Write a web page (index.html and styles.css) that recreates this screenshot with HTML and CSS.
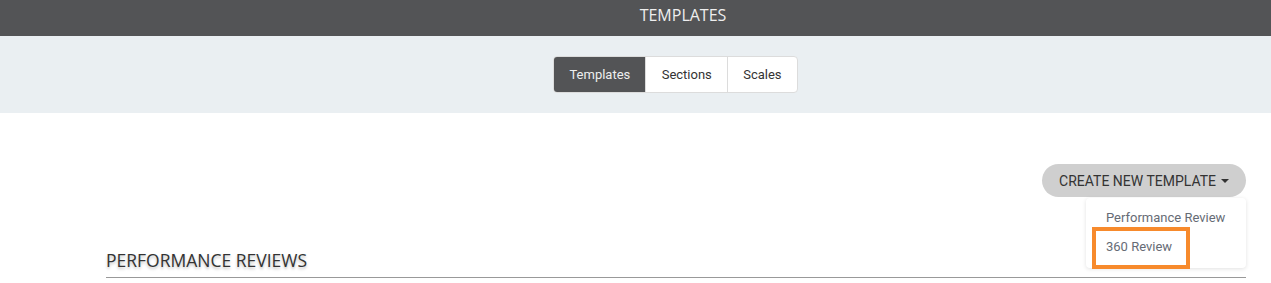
FILE: index.html
```html
<!DOCTYPE html>
<html lang="en">
<head>
<meta charset="utf-8">
<title>Templates</title>
<link rel="stylesheet" href="styles.css">
</head>
<body>
<div class="main">
  <header class="topbar">TEMPLATES</header>
  <nav class="subnav">
    <div class="tabs">
      <a class="tab active">Templates</a>
      <a class="tab">Sections</a>
      <a class="tab">Scales</a>
    </div>
  </nav>
  <section class="content">
    <div class="actions">
      <div class="dropdown">
        <button class="create-btn">CREATE NEW TEMPLATE<span class="caret"></span></button>
        <ul class="menu">
          <li class="menu-item">Performance Review</li>
          <li class="menu-item">360 Review</li>
          <li class="highlight"></li>
        </ul>
      </div>
    </div>
    <h2 class="section-title">PERFORMANCE REVIEWS</h2>
  </section>
</div>
</body>
</html>
```

FILE: styles.css
```css
* { box-sizing: border-box; }
html, body { margin: 0; padding: 0; background: #fff; }
body { font-family: Roboto, "Liberation Sans", sans-serif; overflow: hidden; }

.topbar {
  height: 36px;
  background: #535456;
  color: #eeeeee;
  font-family: "Open Sans", sans-serif;
  font-size: 16px;
  line-height: 22px;
  padding: 4px 0 0 95px;
  text-align: center;
}

.subnav {
  background: #eaeff2;
  height: 77px;
  padding: 20px 0 0 80px;
  display: flex;
  justify-content: center;
}
.tabs {
  display: flex;
  height: 37px;
  border: 1px solid #dcdcdc;
  border-radius: 4px;
  background: #fff;
  overflow: hidden;
}
.tab {
  font-size: 13px;
  color: #333;
  line-height: 35px;
  padding: 0 15.2px;
  border-left: 1px solid #dcdcdc;
}
.tab:first-child { border-left: 0; }
.tab.active { background: #535456; color: #eeeeee; }

.content { padding: 0 25px 0 106px; }
.actions { display: flex; justify-content: flex-end; margin-top: 51px; }
.dropdown { position: relative; }
.create-btn {
  height: 33px;
  border: 0;
  border-radius: 17px;
  background: #cfcfcf;
  color: #333;
  font-family: Roboto, sans-serif;
  font-size: 14px;
  padding: 0 17px;
  display: flex;
  align-items: center;
}
.caret {
  display: inline-block;
  margin-left: 5px;
  border-left: 4px solid transparent;
  border-right: 4px solid transparent;
  border-top: 4px solid #333;
}
.menu {
  position: absolute;
  right: 0;
  top: 34px;
  width: 160px;
  margin: 0;
  padding: 5px 0 7px;
  list-style: none;
  background: #fff;
  border-radius: 4px;
  box-shadow: 0 1px 4px rgba(0,0,0,0.12);
}
.menu-item {
  font-size: 13px;
  line-height: 29px;
  padding-left: 20px;
  color: #666b75;
  white-space: nowrap;
}
.highlight {
  position: absolute;
  left: 6px;
  top: 29px;
  width: 98px;
  height: 42px;
  border: 4px solid #f78a2c;
}

.section-title {
  margin: 52px 0 0;
  font-family: "Open Sans", sans-serif;
  font-weight: 400;
  font-size: 17.5px;
  line-height: 23px;
  color: #333;
  padding-bottom: 5px;
  border-bottom: 1px solid #999;
  text-shadow: 0 2px 3px rgba(0,0,0,0.25);
}
```
